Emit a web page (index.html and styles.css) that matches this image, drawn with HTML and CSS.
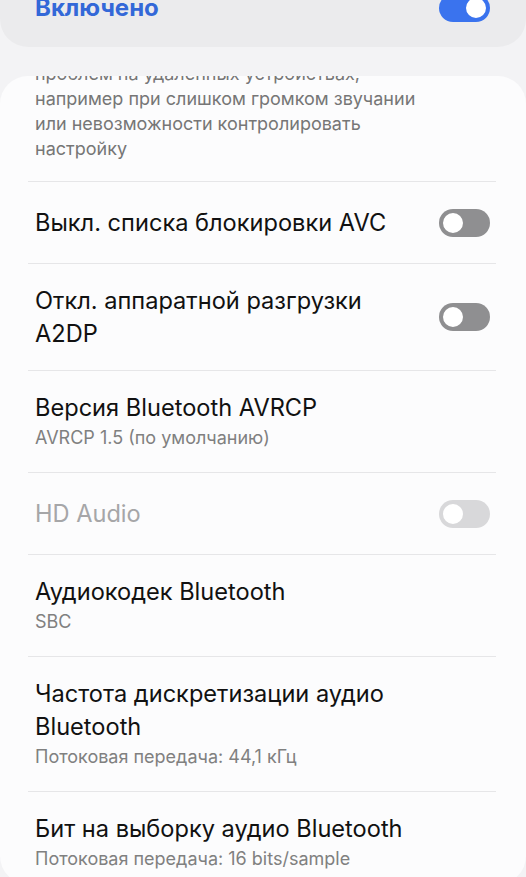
FILE: index.html
```html
<!DOCTYPE html>
<html lang="ru">
<head>
  <meta charset="UTF-8" />
  <meta name="viewport" content="width=device-width, initial-scale=1.0" />
  <title>Параметры разработчика</title>
  <link rel="stylesheet" href="styles.css">
</head>
<body>

  <div class="master-card">
    <span class="master-label">Включено</span>
    <span class="switch on"></span>
  </div>

  <div class="list-card">
    <div class="list">
      <p class="desc">проблем на удаленных устройствах,<br>например при слишком громком звучании<br>или невозможности контролировать<br>настройку</p>

      <div class="row">
        <div class="row-text">
          <div class="title">Выкл. списка блокировки AVC</div>
        </div>
        <span class="switch"></span>
      </div>

      <div class="row">
        <div class="row-text">
          <div class="title">Откл. аппаратной разгрузки<br>A2DP</div>
        </div>
        <span class="switch"></span>
      </div>

      <div class="row">
        <div class="row-text">
          <div class="title">Версия Bluetooth AVRCP</div>
          <div class="sub">AVRCP 1.5 (по умолчанию)</div>
        </div>
      </div>

      <div class="row disabled">
        <div class="row-text">
          <div class="title">HD Audio</div>
        </div>
        <span class="switch"></span>
      </div>

      <div class="row">
        <div class="row-text">
          <div class="title">Аудиокодек Bluetooth</div>
          <div class="sub">SBC</div>
        </div>
      </div>

      <div class="row">
        <div class="row-text">
          <div class="title">Частота дискретизации аудио<br>Bluetooth</div>
          <div class="sub">Потоковая передача: 44,1 кГц</div>
        </div>
      </div>

      <div class="row">
        <div class="row-text">
          <div class="title">Бит на выборку аудио Bluetooth</div>
          <div class="sub">Потоковая передача: 16 bits/sample</div>
        </div>
      </div>
    </div>
  </div>

</body>
</html>
```

FILE: styles.css
```css
html, body {
  height: 100%;
}
body {
  margin: 0;
  background: #f3f3f5;
  font-family: Inter, Roboto, "Noto Sans", sans-serif;
  color: #111;
  overflow: hidden;
}
.master-card {
  margin-top: -32px;
  height: 79px;
  background: #ebebed;
  border-radius: 28px;
  display: flex;
  align-items: center;
  justify-content: space-between;
  padding: 0 36px 0 35px;
}
.master-label {
  color: #3368d8;
  font-size: 24px;
  font-weight: 700;
}
.list-card {
  margin-top: 29px;
  background: #fcfcfd;
  border-radius: 28px;
  height: 808px;
  overflow: hidden;
}
.list {
  margin: 0 30px 0 28px;
}
.desc {
  margin: -15px 0 0;
  padding: 0 7px 20px;
  font-size: 18px;
  line-height: 25px;
  color: #767676;
}
.row {
  display: flex;
  align-items: center;
  justify-content: space-between;
  box-sizing: border-box;
  min-height: 82px;
  padding: 20px 6px 20px 7px;
  border-top: 1px solid #e6e6e8;
}
.title {
  font-size: 23.6px;
  line-height: 33px;
}
.sub {
  font-size: 18px;
  line-height: 28px;
  color: #808080;
}
.disabled .title {
  color: #a6a6a8;
}
.switch {
  position: relative;
  flex: none;
  width: 51px;
  height: 28px;
  border-radius: 14px;
  background: #8f8f91;
}
.switch::after {
  content: "";
  position: absolute;
  top: 2px;
  left: 2px;
  width: 20px;
  height: 20px;
  border-radius: 50%;
  background: #fff;
  border: 2px solid #8f8f91;
}
.switch.on {
  background: #3a73ee;
}
.switch.on::after {
  left: auto;
  right: 2px;
  border-color: #3a73ee;
}
.disabled .switch {
  background: #d8d8da;
}
.disabled .switch::after {
  border-color: #d8d8da;
}
```
